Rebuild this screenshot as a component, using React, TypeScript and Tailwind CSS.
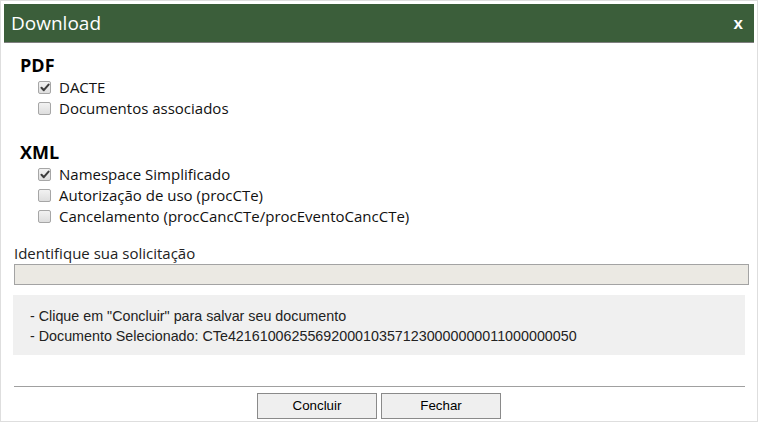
import React from "react";

const seg = { fontFamily: '"Open Sans", "Noto Sans", sans-serif' };

function Box({ checked }: { checked?: boolean }) {
  return (
    <span className="inline-flex h-[13px] w-[13px] shrink-0 items-center justify-center rounded-[2px] border border-[#a6a6a6] bg-gradient-to-b from-[#f2f2f2] to-[#dedede]">
      {checked && (
        <svg width="10" height="9" viewBox="0 0 10 9">
          <path d="M1.5 4.8 L3.8 7.2 L8.6 1.6" fill="none" stroke="#3d3d3d" strokeWidth="2" strokeLinecap="round" strokeLinejoin="round" />
        </svg>
      )}
    </span>
  );
}

function Row({ label, checked }: { label: string; checked?: boolean }) {
  return (
    <div className="ml-[24px] flex h-[21px] items-center gap-[8px]">
      <Box checked={checked} />
      <span className="text-[15px] text-[#111]">{label}</span>
    </div>
  );
}

export default function App() {
  return (
    <div className="flex h-[422px] w-[758px] flex-col border border-[#dedede] bg-white p-[3px]" style={seg}>
      <div className="flex h-[39px] shrink-0 items-center justify-between border-b border-[#7f7f7f] bg-[#3b5e3a] pl-[7px] pr-[11px]">
        <span className="text-[19px] leading-none text-white">Download</span>
        <span className="text-[17px] font-bold leading-none text-white" style={{ fontFamily: '"Liberation Sans", sans-serif' }}>x</span>
      </div>
      <div className="flex flex-col pl-[10px]">
        <div className="ml-[6px] mt-[10px] h-[24px] text-[18px] font-bold leading-[24px] text-black">PDF</div>
        <Row label="DACTE" checked />
        <Row label="Documentos associados" />
        <div className="ml-[6px] mt-[22px] h-[23px] text-[18px] font-bold leading-[23px] text-black">XML</div>
        <Row label="Namespace Simplificado" checked />
        <Row label="Autorização de uso (procCTe)" />
        <Row label="Cancelamento (procCancCTe/procEventoCancCTe)" />
        <div className="mt-[15px] h-[22px] text-[15px] leading-[22px] text-[#222]">Identifique sua solicitação</div>
        <div className="h-[21px] w-[735px] border border-[#a3a3a3] bg-[#ebe9e3]" />
        <div
          className="-ml-px mt-[10px] flex w-[732px] flex-col bg-[#f0f0f0] pb-[9px] pl-[17px] pt-[11px] text-[14.3px] leading-[20px] text-[#222]"
          style={{ fontFamily: '"Liberation Sans", Arial, sans-serif' }}
        >
          <div>- Clique em "Concluir" para salvar seu documento</div>
          <div>- Documento Selecionado: CTe42161006255692000103571230000000011000000050</div>
        </div>
        <div className="mt-[31px] h-px w-[731px] bg-[#a0a0a0]" />
        <div className="mt-[6px] flex justify-center gap-[4px] pr-[10px]" style={{ fontFamily: '"Liberation Sans", Arial, sans-serif' }}>
          <button className="h-[26px] w-[120px] border border-[#8a8a8a] bg-[#efefef] text-[13.33px] text-black">Concluir</button>
          <button className="h-[26px] w-[120px] border border-[#8a8a8a] bg-[#efefef] text-[13.33px] text-black">Fechar</button>
        </div>
      </div>
    </div>
  );
}
